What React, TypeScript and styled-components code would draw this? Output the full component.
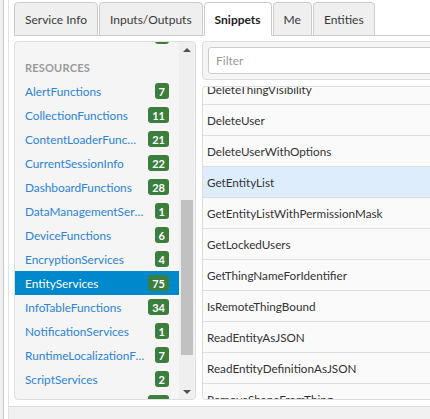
import React, { useLayoutEffect, useRef } from 'react'
import styled, { createGlobalStyle } from 'styled-components'

const GlobalStyle = createGlobalStyle`
  html, body {
    margin: 0;
    padding: 0;
    background: #f0f0f0;
    overflow: hidden;
  }
  body {
    font-family: Lato, "Liberation Sans", sans-serif;
    color: #333;
  }
  * {
    box-sizing: border-box;
  }
`

const Shell = styled.div`
  margin-left: 3px;
  height: 419px;
  padding-left: 4px;
  background: #fff;
  border-left: 1px solid #c9c9c9;
`

const Frame = styled.div`
  height: 100%;
  display: flex;
  flex-direction: column;
  border-left: 1px solid #e2e2e2;
`

const Main = styled.div`
  flex: 1;
  min-height: 0;
  display: flex;
  flex-direction: column;
  gap: 5px;
  padding: 2px 0 6px 5px;
`

const Footer = styled.div`
  height: 13px;
  flex: none;
  background: #f0f0f0;
  border-top: 1px solid #dcdcdc;
`

const TabBar = styled.div`
  height: 34px;
  flex: none;
  display: flex;
  align-items: flex-start;
  gap: 1px;
  border-bottom: 1px solid #cccccc;
`

const Tab = styled.div<{ $active?: boolean }>`
  height: 34px;
  padding: 0 10px;
  display: flex;
  align-items: center;
  font-size: 12px;
  font-weight: ${({ $active }) => ($active ? 700 : 400)};
  color: ${({ $active }) => ($active ? '#222' : '#3a3a3a')};
  background: ${({ $active }) => ($active ? '#fff' : '#efefef')};
  border: 1px solid #cccccc;
  border-bottom-color: ${({ $active }) => ($active ? '#fff' : '#cccccc')};
  border-radius: 4px 4px 0 0;
`

const Content = styled.div`
  flex: 1;
  min-height: 0;
  display: flex;
  gap: 6px;
`

const CategoryPanel = styled.div`
  width: 182px;
  flex: none;
  display: flex;
  padding-right: 1px;
  background: #f5f5f5;
  border: 1px solid #dddddd;
  border-radius: 4px;
  overflow: hidden;
`

const CategoryScroll = styled.div`
  position: relative;
  flex: 1;
  min-width: 0;
  overflow: hidden;
`

const GroupHeader = styled.div`
  padding: 13px 10px 5px;
  font-size: 11px;
  line-height: 13px;
  font-weight: 700;
  color: #9a9a9a;
  letter-spacing: 0.2px;
`

const CategoryRow = styled.div<{ $selected?: boolean }>`
  height: 24px;
  display: flex;
  align-items: center;
  gap: 6px;
  padding: 0 10px;
  font-size: 11.8px;
  color: ${({ $selected }) => ($selected ? '#fff' : '#2d83d6')};
  background: ${({ $selected }) => ($selected ? '#0088cc' : 'transparent')};
`

const CategoryName = styled.span`
  flex: 1;
  min-width: 0;
  white-space: nowrap;
  overflow: hidden;
  text-overflow: ellipsis;
`

const Badge = styled.span`
  flex: none;
  height: 16px;
  min-width: 14px;
  padding: 0 4px;
  display: flex;
  align-items: center;
  justify-content: center;
  font-size: 11px;
  font-weight: 700;
  color: #fff;
  background: #3c7e3d;
  border-radius: 3px;
`

const Scrollbar = styled.div`
  width: 15px;
  flex: none;
  display: flex;
  flex-direction: column;
  background: #efefef;
`

const ArrowButton = styled.div`
  height: 15px;
  flex: none;
  display: flex;
  align-items: center;
  justify-content: center;
`

const Arrow = styled.span<{ $dir: 'up' | 'down' }>`
  width: 0;
  height: 0;
  border-left: 4px solid transparent;
  border-right: 4px solid transparent;
  ${({ $dir }) =>
    $dir === 'up' ? 'border-bottom: 4px solid #505050;' : 'border-top: 4px solid #505050;'}
`

const Track = styled.div`
  flex: 1;
  display: flex;
  flex-direction: column;
`

const Thumb = styled.div<{ $offset: number; $size: number }>`
  margin: ${({ $offset }) => $offset}px 1px 0 2px;
  height: ${({ $size }) => $size}px;
  background: #c1c1c1;
`

const SnippetColumn = styled.div`
  width: 262px;
  flex: none;
  display: flex;
  flex-direction: column;
  gap: 6px;
`

const FilterPanel = styled.div`
  flex: none;
  padding: 5px;
  background: #f5f5f5;
  border: 1px solid #dddddd;
  border-radius: 4px;
`

const FilterInput = styled.input`
  display: block;
  width: 100%;
  height: 27px;
  padding: 0 7px;
  font-family: inherit;
  font-size: 12px;
  color: #333;
  background: #fff;
  border: 1px solid #cccccc;
  border-radius: 3px;
  outline: none;

  &::placeholder {
    color: #9a9a9a;
  }
`

const SnippetList = styled.div`
  flex: 1;
  min-height: 0;
  overflow: hidden;
  position: relative;
  background: #fafafa;
  border: 1px solid #dddddd;
  border-right: none;
  border-radius: 4px 0 0 4px;
`

const SnippetRow = styled.div<{ $highlight?: boolean }>`
  height: 31px;
  display: flex;
  align-items: center;
  padding: 0 4px;
  font-size: 11.7px;
  color: #333;
  white-space: nowrap;
  background: ${({ $highlight }) => ($highlight ? '#ddedfb' : 'transparent')};
  border-bottom: 1px solid #dedede;
`

interface Category {
  name: string
  count: number
}

const tabs = ['Service Info', 'Inputs/Outputs', 'Snippets', 'Me', 'Entities']

const thingCategories: Category[] = [
  { name: 'GenericServices', count: 24 },
  { name: 'ThingServices', count: 9 },
  { name: 'StreamServices', count: 3 },
]

const resources: Category[] = [
  { name: 'AlertFunctions', count: 7 },
  { name: 'CollectionFunctions', count: 11 },
  { name: 'ContentLoaderFunctions', count: 21 },
  { name: 'CurrentSessionInfo', count: 22 },
  { name: 'DashboardFunctions', count: 28 },
  { name: 'DataManagementServices', count: 1 },
  { name: 'DeviceFunctions', count: 6 },
  { name: 'EncryptionServices', count: 4 },
  { name: 'EntityServices', count: 75 },
  { name: 'InfoTableFunctions', count: 34 },
  { name: 'NotificationServices', count: 1 },
  { name: 'RuntimeLocalizationFunctions', count: 7 },
  { name: 'ScriptServices', count: 2 },
  { name: 'SearchFunctions', count: 14 },
  { name: 'SecurityServices', count: 3 },
]

const snippets = [
  'AddShapeToThing',
  'CreateThing',
  'DeleteEntity',
  'DeleteThing',
  'DeleteThingVisibility',
  'DeleteUser',
  'DeleteUserWithOptions',
  'GetEntityList',
  'GetEntityListWithPermissionMask',
  'GetLockedUsers',
  'GetThingNameForIdentifier',
  'IsRemoteThingBound',
  'ReadEntityAsJSON',
  'ReadEntityDefinitionAsJSON',
  'RemoveShapeFromThing',
  'SetProjectName',
]

const selectedCategory = 'EntityServices'
const highlightedSnippet = 'GetEntityList'

export default function App() {
  const categoryScrollRef = useRef<HTMLDivElement>(null)
  const resourcesRef = useRef<HTMLDivElement>(null)
  const snippetListRef = useRef<HTMLDivElement>(null)
  const firstVisibleRef = useRef<HTMLDivElement>(null)

  useLayoutEffect(() => {
    // keep the scroll positions the panels had in the screenshot
    if (categoryScrollRef.current && resourcesRef.current) {
      categoryScrollRef.current.scrollTop = resourcesRef.current.offsetTop - 6
    }
    if (snippetListRef.current && firstVisibleRef.current) {
      snippetListRef.current.scrollTop = firstVisibleRef.current.offsetTop + 13
    }
  }, [])

  return (
    <>
      <GlobalStyle />
      <Shell>
        <Frame>
          <Main>
            <TabBar>
              {tabs.map(tab => (
                <Tab key={tab} $active={tab === 'Snippets'}>
                  {tab}
                </Tab>
              ))}
            </TabBar>

            <Content>
              <CategoryPanel>
                <CategoryScroll ref={categoryScrollRef}>
                  <GroupHeader>THINGS</GroupHeader>
                  {thingCategories.map(c => (
                    <CategoryRow key={c.name}>
                      <CategoryName>{c.name}</CategoryName>
                      <Badge>{c.count}</Badge>
                    </CategoryRow>
                  ))}
                  <GroupHeader ref={resourcesRef}>RESOURCES</GroupHeader>
                  {resources.map(c => (
                    <CategoryRow key={c.name} $selected={c.name === selectedCategory}>
                      <CategoryName>{c.name}</CategoryName>
                      <Badge>{c.count}</Badge>
                    </CategoryRow>
                  ))}
                </CategoryScroll>
                <Scrollbar>
                  <ArrowButton>
                    <Arrow $dir="up" />
                  </ArrowButton>
                  <Track>
                    <Thumb $offset={143} $size={155} />
                  </Track>
                  <ArrowButton>
                    <Arrow $dir="down" />
                  </ArrowButton>
                </Scrollbar>
              </CategoryPanel>

              <SnippetColumn>
                <FilterPanel>
                  <FilterInput placeholder="Filter" />
                </FilterPanel>
                <SnippetList ref={snippetListRef}>
                  {snippets.map(s => (
                    <SnippetRow
                      key={s}
                      ref={s === 'DeleteThingVisibility' ? firstVisibleRef : undefined}
                      $highlight={s === highlightedSnippet}
                    >
                      {s}
                    </SnippetRow>
                  ))}
                </SnippetList>
              </SnippetColumn>
            </Content>
          </Main>
          <Footer />
        </Frame>
      </Shell>
    </>
  )
}
